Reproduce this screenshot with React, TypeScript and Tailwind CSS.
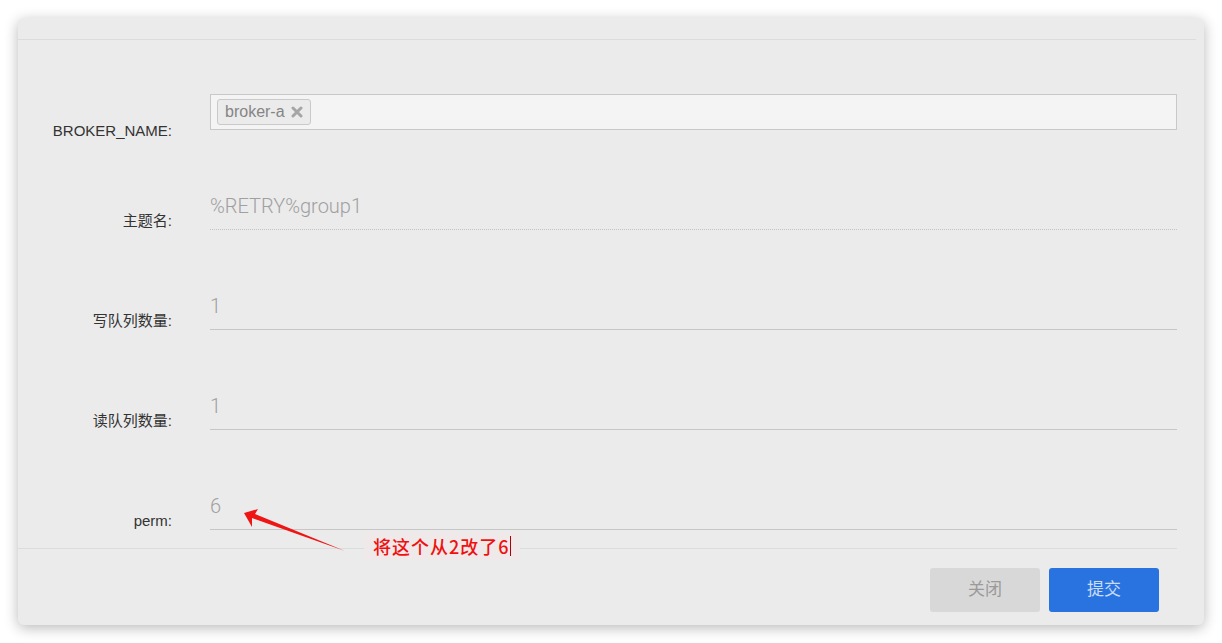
import React from "react";

const labelCls =
  "w-[154px] shrink-0 text-right text-[15px] leading-[20px] text-[#333] pt-[81px]";
const sans = { fontFamily: '"Liberation Sans", Arial, "Noto Sans CJK SC", sans-serif' };

function Row({ label, value, dotted }: { label: string; value: string; dotted?: boolean }) {
  return (
    <div className="flex h-[100px]">
      <div className={labelCls}>{label}</div>
      <div className="ml-[38px] w-[967px]">
        <div
          className={`pt-[64px] pb-[11px] text-[20px] leading-[24px] font-light text-[#a0a0a0] border-b ${
            dotted ? "border-dotted border-[#c4c4c4]" : "border-[#c6c6c6]"
          }`}
          style={{ fontFamily: 'Roboto, "Noto Sans CJK SC", sans-serif' }}
        >
          {value}
        </div>
      </div>
    </div>
  );
}

export default function App() {
  return (
    <div className="w-[1222px] h-[643px] bg-white pt-[18px] pl-[18px] relative overflow-hidden" style={sans}>
      <div className="w-[1186px] h-[607px] rounded-[6px] bg-[#ebebeb] shadow-[0_3px_14px_rgba(0,0,0,0.28)] flex flex-col">
        <div className="h-[21px] mr-[8px] border-b border-[#dcdcdc] box-content" />
        <div className="h-[508px] flex flex-col">
          <div className="flex h-[90px]">
            <div className={labelCls}>BROKER_NAME:</div>
            <div className="ml-[38px] w-[967px] pt-[54px]">
              <div className="h-[36px] bg-[#f4f4f4] border border-[#c8c8c8] flex items-center pl-[6px]">
                <div className="h-[26px] flex items-center gap-[6px] px-[7px] bg-[#ebebeb] border border-[#c9c9c9] rounded-[3px] text-[16px] text-[#858585]">
                  <span>broker-a</span>
                  <svg width="12" height="12" viewBox="0 0 12 12">
                    <path d="M2 2 L10 10 M10 2 L2 10" stroke="#a5a5a5" strokeWidth="3" strokeLinecap="round" />
                  </svg>
                </div>
              </div>
            </div>
          </div>
          <Row label="主题名:" value="%RETRY%group1" dotted />
          <Row label="写队列数量:" value="1" />
          <Row label="读队列数量:" value="1" />
          <Row label="perm:" value="6" />
        </div>
        <div className="mr-[27px] border-t border-[#dcdcdc]" />
        <div className="flex justify-end gap-[9px] pt-[19px] pr-[45px]">
          <button className="w-[110px] h-[44px] rounded-[3px] bg-[#d8d8d8] text-[17px] text-[#9a9a9a]">关闭</button>
          <button className="w-[110px] h-[44px] rounded-[3px] bg-[#2973e0] text-[17px] text-[#c9dcf7]">提交</button>
        </div>
      </div>

      <svg className="absolute left-0 top-0 pointer-events-none" width="1222" height="643">
        <polygon points="244,513 258,509 255,514 345,551 252,518 252,527" fill="#f01515" />
      </svg>
      <div className="absolute left-[364px] top-[532px] w-[156px] h-[28px] bg-[#efe9e9] rounded-[2px] flex items-center pl-[9px]">
        <span className="text-[18px] leading-[20px] font-medium text-[#f01010] tracking-[1px]" style={{ fontFamily: '"Noto Sans CJK SC", sans-serif' }}>
          将这个从2改了6
        </span>
        <span className="w-[1px] h-[20px] bg-[#b00000]" />
      </div>
    </div>
  );
}
